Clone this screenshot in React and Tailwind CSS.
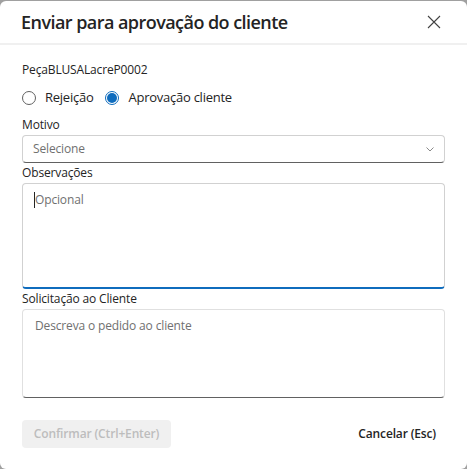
export default function App() {
  const font = { fontFamily: '"Open Sans", "Noto Sans", sans-serif' };
  return (
    <div className="w-[467px] h-[469px] bg-[#a0a0a0] pt-px" style={font}>
      <div className="w-full h-[468px] bg-white rounded-[6px] flex flex-col text-[#242424]">
        <div className="h-[44px] flex items-center justify-between pl-[21px] pr-[26px] border-b-2 border-[#f0f0f0] shrink-0">
          <div className="text-[18px] font-semibold tracking-[-0.55px]">Enviar para aprovação do cliente</div>
          <svg width="14" height="14" viewBox="0 0 14 14" className="text-[#424242]">
            <path d="M1 1L13 13M13 1L1 13" stroke="currentColor" strokeWidth="1.1" />
          </svg>
        </div>
        <div className="px-[22px] flex flex-col text-[12px] tracking-[-0.15px]">
          <div className="mt-[15px] leading-[20px]">PeçaBLUSALacreP0002</div>
          <div className="mt-[8px] flex items-center h-[20px] text-[13px] tracking-[-0.25px]">
            <span className="w-[14px] h-[14px] rounded-full border border-[#616161] bg-white" />
            <span className="ml-[9px]">Rejeição</span>
            <span className="ml-[12px] w-[14px] h-[14px] rounded-full border border-[#0f6cbd] flex items-center justify-center">
              <span className="w-[10px] h-[10px] rounded-full bg-[#0f6cbd]" />
            </span>
            <span className="ml-[9px]">Aprovação cliente</span>
          </div>
          <div className="mt-[7px] leading-[20px]">Motivo</div>
          <div className="h-[28px] border border-[#d1d1d1] border-b-[#616161] rounded-[4px] flex items-center justify-between pl-[10px] pr-[10px]">
            <span className="text-[#707070]">Selecione</span>
            <svg width="8" height="5" viewBox="0 0 8 5">
              <path d="M0.5 0.5L4 4L7.5 0.5" fill="none" stroke="#8a8a8a" strokeWidth="1" />
            </svg>
          </div>
          <div className="leading-[20px]">Observações</div>
          <div className="h-[106px] border border-[#d1d1d1] border-b-2 border-b-[#0f6cbd] rounded-[4px] pl-[11px] pt-[6px]">
            <div className="flex items-center text-[#707070] leading-[20px]">
              <span className="w-px h-[16px] bg-[#242424]" />
              <span>Opcional</span>
            </div>
          </div>
          <div className="leading-[20px]">Solicitação ao Cliente</div>
          <div className="h-[89px] border border-[#e0e0e0] border-b-[#616161] rounded-[4px] pl-[12px] pt-[6px]">
            <div className="text-[#707070] leading-[20px]">Descreva o pedido ao cliente</div>
          </div>
          <div className="mt-[22px] flex items-center justify-between">
            <div className="h-[28px] w-[149px] rounded-[4px] bg-[#f0f0f0] text-[#bdbdbd] font-semibold flex items-center justify-center">
              Confirmar (Ctrl+Enter)
            </div>
            <div className="font-semibold mr-[9px]">Cancelar (Esc)</div>
          </div>
        </div>
      </div>
    </div>
  );
}
